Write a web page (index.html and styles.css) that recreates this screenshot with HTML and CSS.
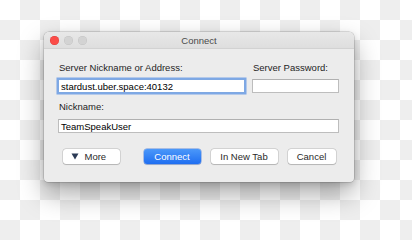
FILE: index.html
```html
<!DOCTYPE html>
<html>
<head>
<meta charset="utf-8">
<link rel="stylesheet" href="styles.css">
</head>
<body>
<div class="dialog">
  <div class="titlebar">
    <div class="lights">
      <span class="light red"></span>
      <span class="light"></span>
      <span class="light"></span>
    </div>
    <div class="title">Connect</div>
  </div>
  <div class="content">
    <div class="row">
      <div class="col main">
        <div class="label">Server Nickname or Address:</div>
        <div class="input focus">stardust.uber.space:40132</div>
      </div>
      <div class="col side">
        <div class="label">Server Password:</div>
        <div class="input"></div>
      </div>
    </div>
    <div class="label second">Nickname:</div>
    <div class="input">TeamSpeakUser</div>
    <div class="buttons">
      <div class="btn more">
        <svg width="8" height="7" viewBox="0 0 8 7"><polygon points="0.5,0.5 7.5,0.5 4,6.5" fill="#2b3a55"/></svg>
        <span>More</span>
      </div>
      <div class="btn primary">Connect</div>
      <div class="btn newtab">In New Tab</div>
      <div class="btn cancel">Cancel</div>
    </div>
  </div>
</div>
</body>
</html>
```
FILE: styles.css
```css
html, body {
  margin: 0;
  height: 100%;
}
body {
  background-color: #fff;
  background-image: conic-gradient(#eeeeee 0 25%, #ffffff 0 50%, #eeeeee 0 75%, #ffffff 0);
  background-size: 40px 40px;
  padding: 32px 0 0 44px;
  box-sizing: border-box;
  font-family: "Liberation Sans", Arial, sans-serif;
  font-size: 9.5px;
  color: #1e1e1e;
}
.dialog {
  width: 310px;
  height: 150px;
  background: #ececec;
  border-radius: 5px 5px 4px 4px;
  box-shadow: 0 0 0 0.5px rgba(0,0,0,0.22), 0 12px 26px rgba(0,0,0,0.34), 0 2px 6px rgba(0,0,0,0.14);
  overflow: hidden;
  display: flex;
  flex-direction: column;
}
.titlebar {
  height: 16px;
  border-bottom: 1px solid #d2d2d2;
  background: linear-gradient(#e8e8e8, #dedede);
  position: relative;
  display: flex;
  align-items: center;
}
.lights {
  display: flex;
  gap: 5px;
  padding-left: 5.5px;
}
.light {
  width: 9px;
  height: 9px;
  border-radius: 50%;
  background: #d3d3d3;
  box-shadow: inset 0 0 0 0.5px rgba(0,0,0,0.08);
}
.light.red {
  background: #fb4c48;
  box-shadow: inset 0 0 0 0.5px rgba(200,40,40,0.5);
}
.title {
  position: absolute;
  left: 0;
  right: 0;
  top: 0;
  bottom: 0;
  display: flex;
  align-items: center;
  justify-content: center;
  color: #4a4a4a;
  font-size: 9.5px;
}
.content {
  flex: 1;
  padding: 13px 15px 0 14px;
  display: flex;
  flex-direction: column;
}
.row {
  display: flex;
  gap: 7px;
}
.col {
  display: flex;
  flex-direction: column;
}
.col.main { width: 187px; }
.col.side { flex: 1; }
.label {
  height: 12px;
  line-height: 12px;
  padding-left: 1px;
  margin-bottom: 5px;
  white-space: nowrap;
}
.label.second {
  margin-top: 8px;
  margin-bottom: 6px;
}
.input {
  height: 14px;
  box-sizing: border-box;
  background: #fff;
  border: 0.5px solid #bdbdbd;
  border-top-color: #b0b0b0;
  line-height: 13px;
  padding-left: 2px;
  color: #000;
  white-space: nowrap;
}
.input.focus {
  box-shadow: 0 0 0 1.5px rgba(88,146,228,0.75);
  border-color: #7fa8e2;
}
.buttons {
  display: flex;
  margin-top: 16px;
  padding-left: 4.5px;
}
.btn {
  height: 15px;
  box-sizing: border-box;
  background: #fff;
  border-radius: 3px;
  box-shadow: 0 0 0 0.5px rgba(0,0,0,0.2), 0 0.5px 1px rgba(0,0,0,0.15);
  display: flex;
  align-items: center;
  justify-content: center;
  color: #2a2a2a;
}
.btn.more {
  width: 57px;
  justify-content: flex-start;
  padding-left: 8px;
  gap: 6px;
}
.btn.more svg { display: block; }
.btn.primary {
  width: 57px;
  margin-left: 24px;
  background: linear-gradient(#4b98f9, #1f6ef1);
  color: #fff;
  box-shadow: 0 0 0 0.5px rgba(20,90,220,0.6), 0 0.5px 1px rgba(0,0,0,0.15);
}
.btn.newtab {
  width: 67px;
  margin-left: 10px;
}
.btn.cancel {
  width: 48px;
  margin-left: 10px;
}
```
